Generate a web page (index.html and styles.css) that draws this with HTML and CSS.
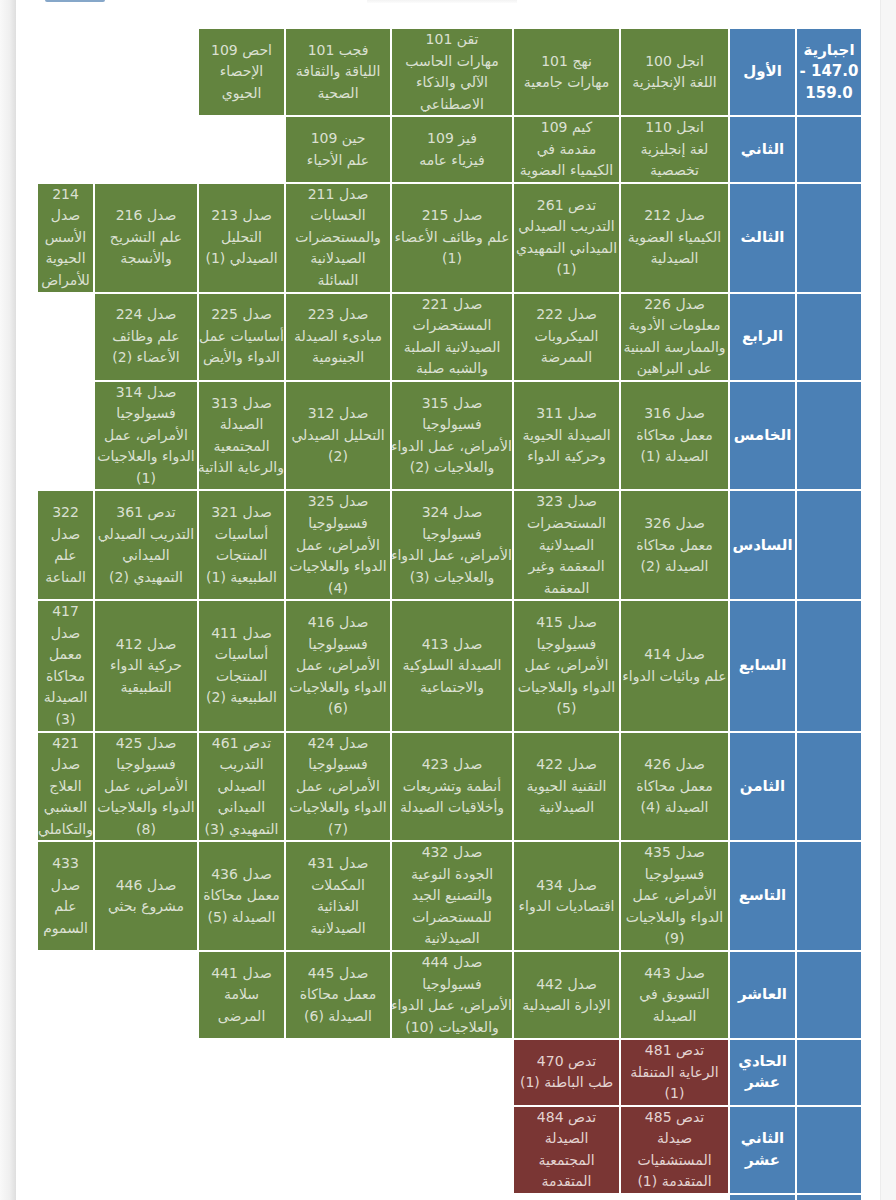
FILE: index.html
```html
<!DOCTYPE html>
<html lang="ar">
<head>
<meta charset="utf-8">
<title>الخطة الدراسية</title>
<link rel="stylesheet" href="styles.css">
</head>
<body>
<div class="page">
  <div class="edge-left"></div>
  <main class="card">
    <div class="topbar">
      <span class="btn-stub"></span>
      <span class="shade-stub"></span>
    </div>
    <div class="table-wrap">
      <table class="plan" dir="rtl">
        <colgroup>
          <col class="w-cat"><col class="w-sem"><col class="w-c3"><col class="w-c4"><col class="w-c5"><col class="w-c6"><col class="w-c7"><col class="w-c8"><col class="w-c9">
        </colgroup>
        <tbody>
          <tr>
            <th class="cat">اجبارية<br>147.0 -<br>159.0</th>
            <th class="sem">الأول</th>
            <td class="g">انجل 100<br>اللغة الإنجليزية</td>
            <td class="g">نهج 101<br>مهارات جامعية</td>
            <td class="g">تقن 101<br>مهارات الحاسب<br>الآلي والذكاء<br>الاصطناعي</td>
            <td class="g">فجب 101<br>اللياقة والثقافة<br>الصحية</td>
            <td class="g">احص 109<br>الإحصاء<br>الحيوي</td>
          </tr>
          <tr>
            <th class="cat"></th>
            <th class="sem">الثاني</th>
            <td class="g">انجل 110<br>لغة إنجليزية<br>تخصصية</td>
            <td class="g">كيم 109<br>مقدمة في<br>الكيمياء العضوية</td>
            <td class="g">فيز 109<br>فيزياء عامه</td>
            <td class="g">حين 109<br>علم الأحياء</td>
          </tr>
          <tr>
            <th class="cat"></th>
            <th class="sem">الثالث</th>
            <td class="g">صدل 212<br>الكيمياء العضوية<br>الصيدلية</td>
            <td class="g">تدص 261<br>التدريب الصيدلي<br>الميداني التمهيدي<br>(1)</td>
            <td class="g">صدل 215<br>علم وظائف الأعضاء<br>(1)</td>
            <td class="g">صدل 211<br>الحسابات<br>والمستحضرات<br>الصيدلانية<br>السائلة</td>
            <td class="g">صدل 213<br>التحليل<br>الصيدلي (1)</td>
            <td class="g">صدل 216<br>علم التشريح<br>والأنسجة</td>
            <td class="g">214<br>صدل<br>الأسس<br>الحيوية<br>للأمراض</td>
          </tr>
          <tr>
            <th class="cat"></th>
            <th class="sem">الرابع</th>
            <td class="g">صدل 226<br>معلومات الأدوية<br>والممارسة المبنية<br>على البراهين</td>
            <td class="g">صدل 222<br>الميكروبات<br>الممرضة</td>
            <td class="g">صدل 221<br>المستحضرات<br>الصيدلانية الصلبة<br>والشبه صلبة</td>
            <td class="g">صدل 223<br>مبادىء الصيدلة<br>الجينومية</td>
            <td class="g">صدل 225<br>أساسيات عمل<br>الدواء والأيض</td>
            <td class="g">صدل 224<br>علم وظائف<br>الأعضاء (2)</td>
          </tr>
          <tr>
            <th class="cat"></th>
            <th class="sem">الخامس</th>
            <td class="g">صدل 316<br>معمل محاكاة<br>الصيدلة (1)</td>
            <td class="g">صدل 311<br>الصيدلة الحيوية<br>وحركية الدواء</td>
            <td class="g">صدل 315<br>فسيولوجيا<br>الأمراض، عمل الدواء<br>والعلاجيات (2)</td>
            <td class="g">صدل 312<br>التحليل الصيدلي<br>(2)</td>
            <td class="g">صدل 313<br>الصيدلة<br>المجتمعية<br>والرعاية الذاتية</td>
            <td class="g">صدل 314<br>فسيولوجيا<br>الأمراض، عمل<br>الدواء والعلاجيات<br>(1)</td>
          </tr>
          <tr>
            <th class="cat"></th>
            <th class="sem">السادس</th>
            <td class="g">صدل 326<br>معمل محاكاة<br>الصيدلة (2)</td>
            <td class="g">صدل 323<br>المستحضرات<br>الصيدلانية<br>المعقمة وغير<br>المعقمة</td>
            <td class="g">صدل 324<br>فسيولوجيا<br>الأمراض، عمل الدواء<br>والعلاجيات (3)</td>
            <td class="g">صدل 325<br>فسيولوجيا<br>الأمراض، عمل<br>الدواء والعلاجيات<br>(4)</td>
            <td class="g">صدل 321<br>أساسيات<br>المنتجات<br>الطبيعية (1)</td>
            <td class="g">تدص 361<br>التدريب الصيدلي<br>الميداني<br>التمهيدي (2)</td>
            <td class="g">322<br>صدل<br>علم<br>المناعة</td>
          </tr>
          <tr>
            <th class="cat"></th>
            <th class="sem">السابع</th>
            <td class="g">صدل 414<br>علم وبائيات الدواء</td>
            <td class="g">صدل 415<br>فسيولوجيا<br>الأمراض، عمل<br>الدواء والعلاجيات<br>(5)</td>
            <td class="g">صدل 413<br>الصيدلة السلوكية<br>والاجتماعية</td>
            <td class="g">صدل 416<br>فسيولوجيا<br>الأمراض، عمل<br>الدواء والعلاجيات<br>(6)</td>
            <td class="g">صدل 411<br>أساسيات<br>المنتجات<br>الطبيعية (2)</td>
            <td class="g">صدل 412<br>حركية الدواء<br>التطبيقية</td>
            <td class="g">417<br>صدل<br>معمل<br>محاكاة<br>الصيدلة<br>(3)</td>
          </tr>
          <tr>
            <th class="cat"></th>
            <th class="sem">الثامن</th>
            <td class="g">صدل 426<br>معمل محاكاة<br>الصيدلة (4)</td>
            <td class="g">صدل 422<br>التقنية الحيوية<br>الصيدلانية</td>
            <td class="g">صدل 423<br>أنظمة وتشريعات<br>وأخلاقيات الصيدلة</td>
            <td class="g">صدل 424<br>فسيولوجيا<br>الأمراض، عمل<br>الدواء والعلاجيات<br>(7)</td>
            <td class="g">تدص 461<br>التدريب<br>الصيدلي<br>الميداني<br>التمهيدي (3)</td>
            <td class="g">صدل 425<br>فسيولوجيا<br>الأمراض، عمل<br>الدواء والعلاجيات<br>(8)</td>
            <td class="g">421<br>صدل<br>العلاج<br>العشبي<br>والتكاملي</td>
          </tr>
          <tr>
            <th class="cat"></th>
            <th class="sem">التاسع</th>
            <td class="g">صدل 435<br>فسيولوجيا<br>الأمراض، عمل<br>الدواء والعلاجيات<br>(9)</td>
            <td class="g">صدل 434<br>اقتصاديات الدواء</td>
            <td class="g">صدل 432<br>الجودة النوعية<br>والتصنيع الجيد<br>للمستحضرات<br>الصيدلانية</td>
            <td class="g">صدل 431<br>المكملات<br>الغذائية<br>الصيدلانية</td>
            <td class="g">صدل 436<br>معمل محاكاة<br>الصيدلة (5)</td>
            <td class="g">صدل 446<br>مشروع بحثي</td>
            <td class="g">433<br>صدل<br>علم<br>السموم</td>
          </tr>
          <tr>
            <th class="cat"></th>
            <th class="sem">العاشر</th>
            <td class="g">صدل 443<br>التسويق في<br>الصيدلة</td>
            <td class="g">صدل 442<br>الإدارة الصيدلية</td>
            <td class="g">صدل 444<br>فسيولوجيا<br>الأمراض، عمل الدواء<br>والعلاجيات (10)</td>
            <td class="g">صدل 445<br>معمل محاكاة<br>الصيدلة (6)</td>
            <td class="g">صدل 441<br>سلامة<br>المرضى</td>
          </tr>
          <tr>
            <th class="cat"></th>
            <th class="sem">الحادي<br>عشر</th>
            <td class="r">تدص 481<br>الرعاية المتنقلة<br>(1)</td>
            <td class="r">تدص 470<br>طب الباطنة (1)</td>
          </tr>
          <tr>
            <th class="cat"></th>
            <th class="sem">الثاني<br>عشر</th>
            <td class="r">تدص 485<br>صيدلة<br>المستشفيات<br>المتقدمة (1)</td>
            <td class="r">تدص 484<br>الصيدلة<br>المجتمعية<br>المتقدمة</td>
          </tr>
          <tr class="tail">
            <th class="cat"></th>
            <th class="sem"></th>
          </tr>
        </tbody>
      </table>
    </div>
  </main>
  <div class="edge-right"></div>
</div>
</body>
</html>
```
FILE: styles.css
```css
html, body {
  margin: 0;
  padding: 0;
  background: #ffffff;
}

body {
  font-family: "DejaVu Sans", "Noto Sans", sans-serif;
  overflow: hidden;
}

.page {
  display: flex;
  height: 1200px;
}

.edge-left {
  width: 16px;
  flex: none;
  background: linear-gradient(to right, #f9f9f9 0%, #efefef 60%, #dedede 100%);
}

.edge-right {
  width: 16px;
  flex: none;
  background: #f6f6f6;
  border-left: 1px solid #ececec;
  box-sizing: border-box;
}

.card {
  flex: 1;
  background: #ffffff;
  display: flex;
  flex-direction: column;
}

.topbar {
  height: 27px;
  display: flex;
  align-items: flex-start;
  flex: none;
}

.btn-stub {
  display: block;
  width: 60px;
  height: 2px;
  margin-left: 29px;
  background: #86a7c9;
  border-radius: 0 0 2px 2px;
}

.shade-stub {
  display: block;
  width: 150px;
  height: 3px;
  margin-left: 262px;
  background: linear-gradient(to bottom, #f3f3f3, #fcfcfc);
}

.table-wrap {
  display: flex;
  justify-content: flex-end;
  padding-right: 17px;
}

.plan {
  direction: rtl;
  table-layout: fixed;
  width: 827px;
  border-collapse: separate;
  border-spacing: 2px;
  font-size: 14px;
  line-height: 21.55px;
}

.w-cat { width: 64px; }
.w-sem { width: 65px; }
.w-c3 { width: 107px; }
.w-c4 { width: 105px; }
.w-c5 { width: 120px; }
.w-c6 { width: 104px; }
.w-c7 { width: 85px; }
.w-c8 { width: 102px; }
.w-c9 { width: 55px; }

.plan th,
.plan td {
  padding: 0;
  text-align: center;
  vertical-align: middle;
  white-space: nowrap;
  overflow: hidden;
}

.plan th {
  background: #4b80b5;
  color: #ffffff;
  font-weight: bold;
  font-size: 15px;
}

.plan td.g {
  background: #63843f;
  color: #dbe0d2;
}

.plan td.r {
  background: #7a3634;
  color: #e3d3d1;
}

.tail th {
  height: 40px;
}
```
